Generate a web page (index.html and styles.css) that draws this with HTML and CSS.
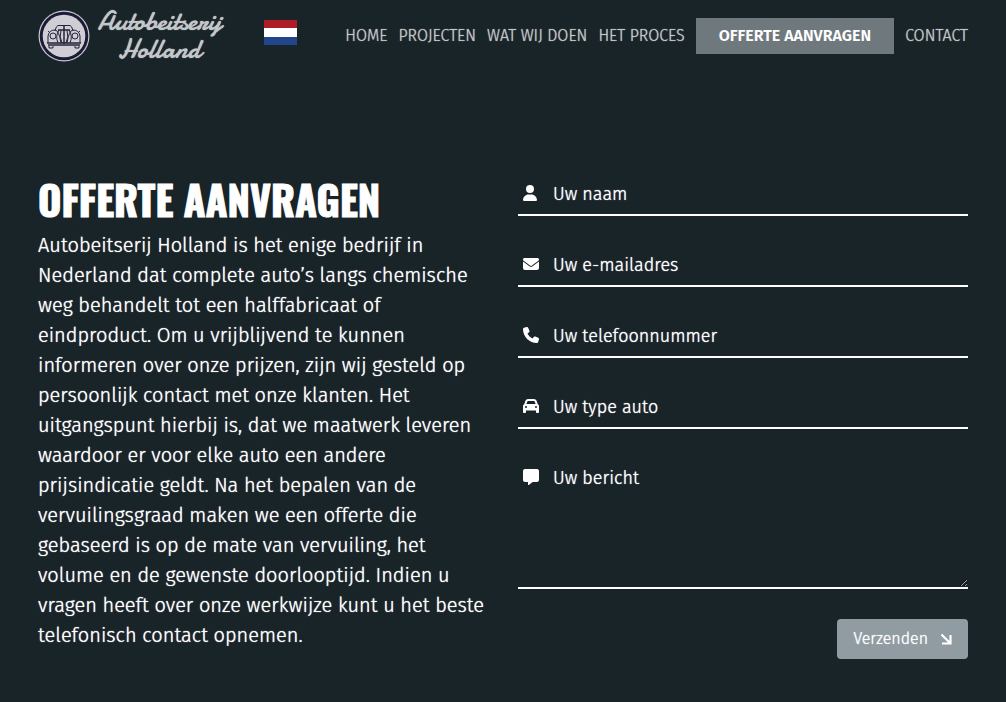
FILE: index.html
```html
<!DOCTYPE html>
<html lang="nl">
<head>
    <meta charset="UTF-8">
    <meta name="viewport" content="width=device-width, initial-scale=1.0">
    <title>Offerte aanvragen - Autobeitserij Holland</title>
    <link rel="stylesheet" href="styles.css">
</head>
<body>
    <header class="header">
        <a href="#" class="logo">
            <svg class="logo-badge" viewBox="0 0 52 52" aria-hidden="true">
                <circle cx="26" cy="26" r="25.5" fill="#c9c9d1"/>
                <circle cx="26" cy="26" r="24.3" fill="#1b1b38"/>
                <circle cx="26" cy="26" r="21.3" fill="#d0cdd5"/>
                <g fill="none" stroke="#23233c" stroke-width="1">
                    <path d="M17 21 Q18 16 20 15.500 H32 Q34 16 35 21"/>
                    <path d="M10 33 V26 Q11 20 17 20 Q21 20 23 33"/>
                    <path d="M42 33 V26 Q41 20 35 20 Q31 20 29 33"/>
                    <path d="M21 20 Q17 26 20 33 M31 20 Q35 26 32 33"/>
                    <path d="M23 20 Q21 27 24 33 M29 20 Q31 27 28 33"/>
                    <circle cx="15" cy="26" r="3"/>
                    <circle cx="37" cy="26" r="3"/>
                    <path d="M10 21 L12 23 M42 21 L40 23"/>
                    <path d="M26 15 V34 M20 20 H32" stroke-width="1.500"/>
                    <path d="M9 33 H43 M10 35 H42" stroke-width="1.500"/>
                    <path d="M11 36 V38 H15 V36 M37 36 V38 H41 V36"/>
                </g>
            </svg>
            <span class="logo-text">
                <span>Autobeitserij</span>
                <span>Holland</span>
            </span>
        </a>
        <a href="#" class="language" aria-label="Nederlands">
            <svg class="flag" viewBox="0 0 33 25" aria-hidden="true">
                <rect width="33" height="25" fill="#fff"/>
                <rect width="33" height="8" fill="#ae1c28"/>
                <rect y="17" width="33" height="8" fill="#21468b"/>
            </svg>
        </a>
        <nav class="nav">
            <a href="#">HOME</a>
            <a href="#">PROJECTEN</a>
            <a href="#">WAT WIJ DOEN</a>
            <a href="#">HET PROCES</a>
            <a href="#" class="active">OFFERTE AANVRAGEN</a>
            <a href="#">CONTACT</a>
        </nav>
    </header>

    <main class="content">
        <section class="intro">
            <h1>OFFERTE AANVRAGEN</h1>
            <p>Autobeitserij Holland is het enige bedrijf in Nederland dat complete auto’s langs chemische weg behandelt tot een halffabricaat of eindproduct. Om u vrijblijvend te kunnen informeren over onze prijzen, zijn wij gesteld op persoonlijk contact met onze klanten. Het uitgangspunt hierbij is, dat we maatwerk leveren waardoor er voor elke auto een andere prijsindicatie geldt. Na het bepalen van de vervuilingsgraad maken we een offerte die gebaseerd is op de mate van vervuiling, het volume en de gewenste doorlooptijd. Indien u vragen heeft over onze werkwijze kunt u het beste telefonisch contact opnemen.</p>
        </section>

        <form class="form">
            <div class="field">
                <label for="naam">
                    <svg class="icon icon-user" viewBox="0 0 448 512" aria-hidden="true"><path d="M224 256A128 128 0 1 0 224 0a128 128 0 1 0 0 256zm-45.700 48C79.800 304 0 383.800 0 482.300C0 498.700 13.300 512 29.700 512H418.300c16.400 0 29.700-13.300 29.700-29.700C448 383.800 368.200 304 269.700 304H178.300z"/></svg>
                </label>
                <input type="text" id="naam" name="naam" placeholder="Uw naam" aria-label="Uw naam">
            </div>
            <div class="field">
                <label for="email">
                    <svg class="icon" viewBox="0 0 512 512" aria-hidden="true"><path d="M48 64C21.500 64 0 85.500 0 112c0 15.100 7.100 29.300 19.200 38.400L236.800 313.600c11.400 8.500 27 8.500 38.400 0L492.800 150.400c12.100-9.100 19.200-23.300 19.200-38.400c0-26.500-21.500-48-48-48H48zM0 176V384c0 35.300 28.700 64 64 64H448c35.300 0 64-28.700 64-64V176L294.400 339.200c-22.800 17.100-54 17.100-76.800 0L0 176z"/></svg>
                </label>
                <input type="email" id="email" name="email" placeholder="Uw e-mailadres" aria-label="Uw e-mailadres">
            </div>
            <div class="field">
                <label for="telefoon">
                    <svg class="icon" viewBox="0 0 512 512" aria-hidden="true"><path d="M164.900 24.600c-7.700-18.600-28-28.500-47.400-23.200l-88 24C12.100 30.200 0 46 0 64C0 311.400 200.600 512 448 512c18 0 33.800-12.100 38.600-29.500l24-88c5.300-19.400-4.600-39.700-23.200-47.400l-96-40c-16.300-6.800-35.200-2.100-46.300 11.600L304.700 368C234.300 334.700 177.300 277.700 144 207.300L193.300 167c13.700-11.200 18.400-30 11.600-46.300l-40-96z"/></svg>
                </label>
                <input type="tel" id="telefoon" name="telefoon" placeholder="Uw telefoonnummer" aria-label="Uw telefoonnummer">
            </div>
            <div class="field">
                <label for="auto">
                    <svg class="icon" viewBox="0 0 512 512" aria-hidden="true"><path d="M135.200 117.400L109.100 192H402.900l-26.100-74.600C372.300 104.600 360.200 96 346.600 96H165.400c-13.600 0-25.700 8.600-30.200 21.400zM39.600 196.800L74.800 96.300C88.300 57.800 124.600 32 165.400 32H346.600c40.800 0 77.100 25.800 90.600 64.300l35.200 100.500c23.200 9.600 39.600 32.500 39.600 59.200V400v48c0 17.700-14.300 32-32 32H448c-17.700 0-32-14.300-32-32V400H96v48c0 17.700-14.300 32-32 32H32c-17.700 0-32-14.300-32-32V400 256c0-26.700 16.400-49.600 39.600-59.200zM128 288a32 32 0 1 0-64 0 32 32 0 1 0 64 0zm288 32a32 32 0 1 0 0-64 32 32 0 1 0 0 64z"/></svg>
                </label>
                <input type="text" id="auto" name="auto" placeholder="Uw type auto" aria-label="Uw type auto">
            </div>
            <div class="field">
                <label for="bericht">
                    <svg class="icon" viewBox="0 0 512 512" aria-hidden="true"><path d="M64 0C28.700 0 0 28.700 0 64V352c0 35.300 28.700 64 64 64h96v80c0 6.100 3.400 11.600 8.800 14.300s11.900 2.100 16.800-1.500L309.300 416H448c35.300 0 64-28.700 64-64V64c0-35.300-28.700-64-64-64H64z"/></svg>
                </label>
                <textarea id="bericht" name="bericht" placeholder="Uw bericht" aria-label="Uw bericht"></textarea>
            </div>
            <button type="submit" class="submit">
                Verzenden
                <svg class="arrow" viewBox="0 0 12 12" aria-hidden="true"><path d="M1.500 1.500 L10 10 M10.500 2 V10.500 H2" fill="none" stroke="#fff" stroke-width="2.200"/></svg>
            </button>
        </form>
    </main>
</body>
</html>
```
FILE: styles.css
```css
* {
    box-sizing: border-box;
    margin: 0;
    padding: 0;
}

body {
    background: #182428;
    color: #fff;
    font-family: 'Fira Sans', 'Noto Sans', sans-serif;
    font-size: 20px;
    font-weight: 300;
    line-height: 30px;
    text-shadow: 0 0 1px currentColor;
}

a {
    color: inherit;
    text-decoration: none;
}

.header {
    display: flex;
    align-items: center;
    padding: 8px 38px;
}

.logo {
    display: flex;
    align-items: center;
    gap: 3px;
    color: #c3c7ca;
}

.logo-badge {
    width: 52px;
    height: 52px;
}

.logo-text {
    display: flex;
    flex-direction: column;
    align-items: center;
    width: 133px;
    font-family: 'Yellowtail', 'Damion', 'Cookie', 'Kaushan Script', 'Lato', sans-serif;
    font-size: 27px;
    font-weight: normal;
    line-height: 28px;
    text-shadow: 0 0 1px #c3c7ca;
}

.language {
    margin-left: 38px;
    padding-bottom: 8px;
    line-height: 0;
}

.flag {
    width: 33px;
    height: 25px;
}

.nav {
    display: flex;
    flex: 1;
    align-items: center;
    justify-content: flex-end;
    gap: 11px;
    color: #c5c8c9;
    font-size: 16px;
    line-height: 36px;
    text-shadow: 0 0 1px #c5c8c9;
    white-space: nowrap;
}

.nav a:hover {
    color: #fff;
}

.nav .active {
    padding: 0 23px;
    background: #6f797d;
    color: #fff;
    font-weight: 600;
    text-shadow: none;
}

.content {
    display: grid;
    grid-template-columns: 1fr 1fr;
    gap: 30px;
    padding: 99px 38px 43px;
}

h1 {
    padding-bottom: 3px;
    font-family: 'Oswald', 'Liberation Sans Narrow', sans-serif;
    font-size: 40px;
    font-weight: bold;
    line-height: 56px;
    text-shadow: none;
    white-space: nowrap;
    -webkit-text-stroke: 1px #fff;
}

.form {
    display: flex;
    flex-direction: column;
    gap: 27px;
    padding-top: 1px;
}

.field {
    display: flex;
    border-bottom: 2px solid #fff;
}

.field label {
    display: flex;
    flex-shrink: 0;
    width: 35px;
    padding: 13px 5px 0;
}

.icon {
    width: 16px;
    height: 16px;
    fill: #fff;
}

.icon-user {
    width: 14px;
}

.field input,
.field textarea {
    flex: 1;
    min-width: 0;
    height: 42px;
    padding: 10px 0 8px;
    border: none;
    outline: none;
    background: transparent;
    color: #fff;
    font-family: inherit;
    font-size: 18px;
    font-weight: inherit;
    line-height: 24px;
    text-shadow: inherit;
}

.field textarea {
    height: 131px;
    resize: vertical;
}

.field input::placeholder,
.field textarea::placeholder {
    color: #fff;
    opacity: 1;
}

.submit {
    display: flex;
    align-items: center;
    align-self: flex-end;
    gap: 12px;
    margin-top: 3px;
    padding: 0 16px;
    border: none;
    border-radius: 4px;
    background: #909ca1;
    color: #fff;
    font-family: inherit;
    font-size: 16px;
    font-weight: inherit;
    line-height: 40px;
    text-shadow: inherit;
    cursor: pointer;
}

.arrow {
    width: 12px;
    height: 12px;
}
```
